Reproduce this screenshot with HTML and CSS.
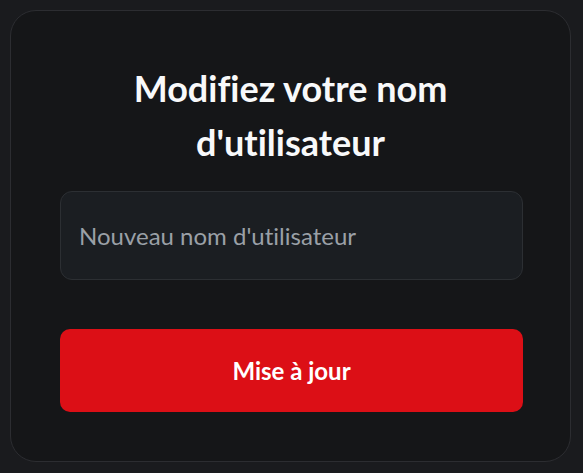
FILE: index.html
```html
<!DOCTYPE html>
<html lang="fr">
<head>
<meta charset="utf-8">
<link rel="stylesheet" href="styles.css">
</head>
<body>
<div class="card">
  <h1 class="title">Modifiez votre nom d'utilisateur</h1>
  <input class="field" type="text" placeholder="Nouveau nom d'utilisateur">
  <button class="btn" type="button">Mise à jour</button>
</div>
</body>
</html>
```
FILE: styles.css
```css
html, body {
  margin: 0;
  padding: 0;
  background: #1a1b1e;
}
body {
  padding: 10px 12px 11px 10px;
  font-family: Lato, "Noto Sans", sans-serif;
  font-variant-ligatures: none;
}
.card {
  box-sizing: border-box;
  width: 561px;
  height: 452px;
  background: #151618;
  border: 1px solid #2c2d31;
  border-radius: 26px;
  padding: 50px 49px 49px 49px;
  display: flex;
  flex-direction: column;
}
.title {
  margin: 0 0 22px;
  font-size: 36px;
  font-weight: 700;
  line-height: 54px;
  color: #f8f9fa;
  text-align: center;
}
.field {
  box-sizing: border-box;
  width: 463px;
  height: 89px;
  background: #1b1e22;
  border: 1px solid #2c2f33;
  border-radius: 12px;
  padding: 0 18px;
  font-family: Lato, sans-serif;
  font-variant-ligatures: none;
  font-size: 24px;
  color: #f8f9fa;
  outline: none;
}
.field::placeholder {
  color: #9aa0a7;
}
.btn {
  margin-top: 49px;
  width: 463px;
  height: 83px;
  border: none;
  border-radius: 10px;
  background: #dc0f16;
  color: #ffffff;
  font-family: Lato, sans-serif;
  font-variant-ligatures: none;
  font-size: 24px;
  font-weight: 700;
  cursor: pointer;
}
```
